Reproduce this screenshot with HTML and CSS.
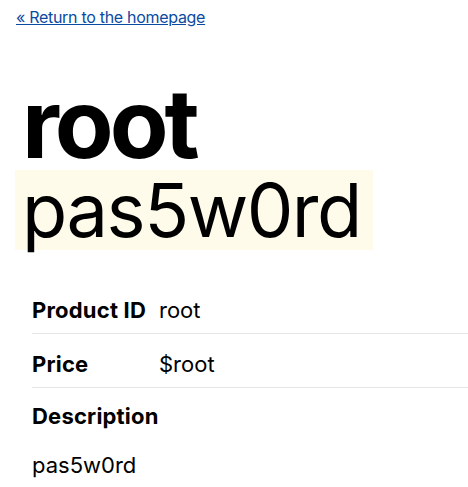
FILE: index.html
```html
<!DOCTYPE html>
<html>
<head>
<meta charset="utf-8">
<link rel="stylesheet" href="styles.css">
</head>
<body>
<main class="page">
  <a class="back" href="#">« Return to the homepage</a>
  <h1 class="title">root</h1>
  <p class="subtitle"><mark class="hl">pas5w0rd</mark></p>
  <table class="details">
    <tr class="row"><th>Product ID</th><td>root</td></tr>
    <tr class="row"><th>Price</th><td>$root</td></tr>
    <tr class="row desc-head"><th colspan="2">Description</th></tr>
    <tr class="row desc-body"><td colspan="2">pas5w0rd</td></tr>
  </table>
</main>
</body>
</html>
```
FILE: styles.css
```css
html, body { margin: 0; padding: 0; background: #fff; }
body { font-family: Inter, "Noto Sans", sans-serif; color: #000; }
.page { padding: 7px 16px 0 16px; }
.back { font-size: 16px; line-height: 19px; color: #0b4aa2; text-decoration: underline; letter-spacing: -0.3px; }
.title { font-size: 96px; font-weight: 700; line-height: 96px; margin: 48px 0 0 6px; letter-spacing: -4px; }
.subtitle { margin: -1px 0 0 0; font-size: 74px; line-height: 80px; height: 80px; }
.hl { display: inline-block; vertical-align: top; height: 80px; line-height: 80px; background: #fffbeb; color: #000; padding: 0 12px 0 7px; margin-left: -1px; letter-spacing: -1.5px; }
.details { margin: 30px 0 0 16px; width: 100%; border-collapse: collapse; font-size: 22px; line-height: 28px; }
.row { border-bottom: 1px solid #e6e6e6; }
.row th, .row td { padding: 16px 0 9px 0; text-align: left; vertical-align: top; }
.row th { font-weight: 700; width: 127px; white-space: nowrap; letter-spacing: 0.2px; }
.desc-head, .desc-body { border-bottom: none; }
.desc-head th { padding-top: 14px; }
.desc-body td { padding-top: 12px; }
```
